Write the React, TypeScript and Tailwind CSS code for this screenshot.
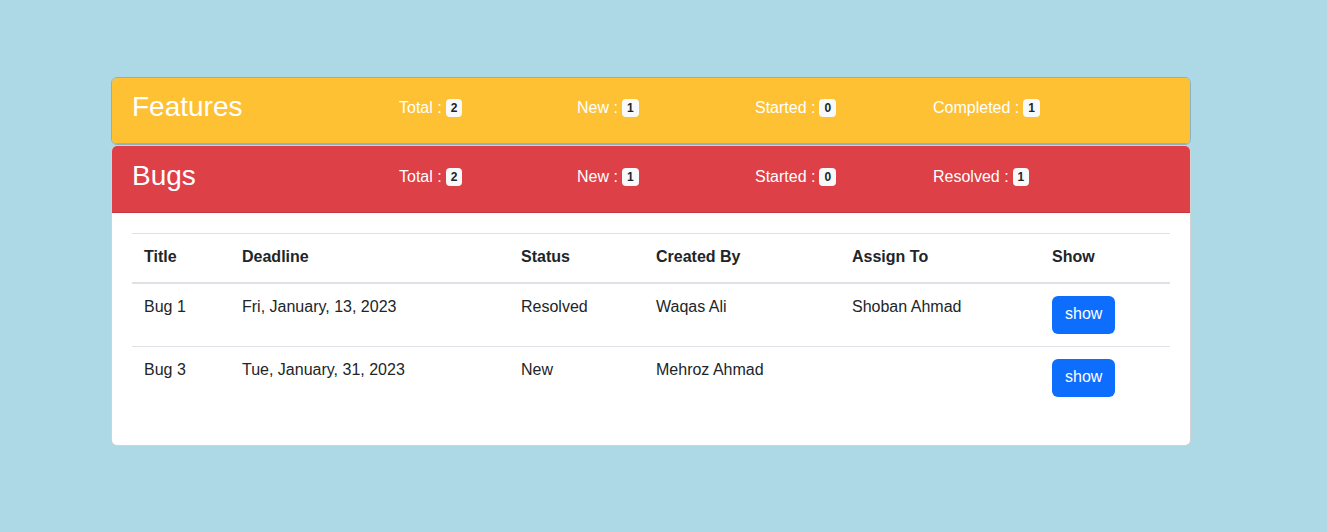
import React from "react";

const font = { fontFamily: '"Liberation Sans", Arial, sans-serif' };

function Badge({ n }: { n: number }) {
  return (
    <span className="ml-[4px] inline-block rounded-[4px] bg-[#f8f9fa] px-[5px] py-[3px] text-[12px] font-bold leading-none text-[#212529] align-[1px]">
      {n}
    </span>
  );
}

function Stat({ label, n }: { label: string; n: number }) {
  return (
    <div className="mt-[6px] w-[178px] text-[16px] leading-[24px] text-white">
      {label} :<Badge n={n} />
    </div>
  );
}

function Header({
  title,
  stats,
  cls,
}: {
  title: string;
  stats: [string, number][];
  cls: string;
}) {
  return (
    <div className={`flex items-start border-b border-black/[0.12] pl-[20px] ${cls}`}>
      <div className="w-[267px] text-[28px] leading-[34px] text-white">{title}</div>
      {stats.map(([l, n]) => (
        <Stat key={l} label={l} n={n} />
      ))}
    </div>
  );
}

const rows = [
  { title: "Bug 1", deadline: "Fri, January, 13, 2023", status: "Resolved", by: "Waqas Ali", to: "Shoban Ahmad" },
  { title: "Bug 3", deadline: "Tue, January, 31, 2023", status: "New", by: "Mehroz Ahmad", to: "" },
];

export default function App() {
  return (
    <div className="min-h-screen bg-[#add8e6] pt-[77px]" style={font}>
      <div className="ml-[111px] w-[1080px]">
        <div className="overflow-hidden rounded-[6px] border border-black/[0.175]">
          <Header
            title="Features"
            cls="h-[66px] pt-[12px] bg-[#fec134]"
            stats={[
              ["Total", 2],
              ["New", 1],
              ["Started", 0],
              ["Completed", 1],
            ]}
          />
        </div>
        <div className="overflow-hidden rounded-[6px] border border-black/[0.175] bg-white">
          <Header
            title="Bugs"
            cls="h-[67px] pt-[13px] bg-[#dd4047]"
            stats={[
              ["Total", 2],
              ["New", 1],
              ["Started", 0],
              ["Resolved", 1],
            ]}
          />
          <div className="px-[20px] pt-[20px] pb-[20px]">
            <table className="mb-[16px] w-[1038px] table-fixed border-collapse text-left text-[16px] leading-[24px] text-[#212529]">
              <colgroup>
                <col className="w-[98px]" />
                <col className="w-[279px]" />
                <col className="w-[135px]" />
                <col className="w-[196px]" />
                <col className="w-[200px]" />
                <col className="w-[130px]" />
              </colgroup>
              <thead>
                <tr className="border-t border-b-2 border-t-[#dee2e6] border-b-[#dee2e6]">
                  {["Title", "Deadline", "Status", "Created By", "Assign To", "Show"].map((h) => (
                    <th key={h} className="px-[12px] pt-[11px] pb-[13px] font-bold">
                      {h}
                    </th>
                  ))}
                </tr>
              </thead>
              <tbody>
                {rows.map((r, i) => (
                  <tr key={r.title} className={i === 0 ? "border-b border-[#dee2e6]" : ""}>
                    <td className="px-[12px] pt-[11px] pb-[13px] align-top">{r.title}</td>
                    <td className="px-[12px] pt-[11px] pb-[13px] align-top">{r.deadline}</td>
                    <td className="px-[12px] pt-[11px] pb-[13px] align-top">{r.status}</td>
                    <td className="px-[12px] pt-[11px] pb-[13px] align-top">{r.by}</td>
                    <td className="px-[12px] pt-[11px] pb-[13px] align-top">{r.to}</td>
                    <td className="px-[12px] pt-[12px] pb-[12px] align-top">
                      <button className="block rounded-[6px] bg-[#0d6efd] px-[13px] pt-[6px] pb-[8px] text-[16px] leading-[24px] text-white">
                        show
                      </button>
                    </td>
                  </tr>
                ))}
              </tbody>
            </table>
          </div>
        </div>
      </div>
    </div>
  );
}
